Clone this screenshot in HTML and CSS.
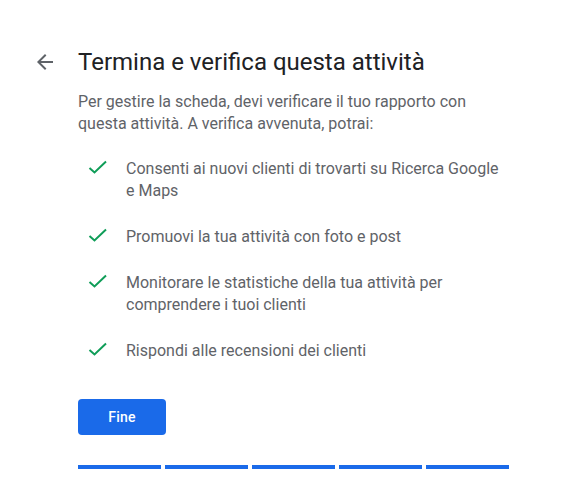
FILE: index.html
```html
<!DOCTYPE html>
<html lang="it">
<head>
<meta charset="utf-8">
<title>Termina e verifica questa attività</title>
<link rel="stylesheet" href="styles.css">
</head>
<body>
<main class="page">
  <header class="header">
    <button class="back" aria-label="Indietro">
      <svg width="24" height="24" viewBox="0 0 24 24"><path d="M20 11H7.83l5.59-5.59L12 4l-8 8 8 8 1.41-1.41L7.83 13H20v-2z" fill="#5f6368"/></svg>
    </button>
    <h1 class="title">Termina e verifica questa attività</h1>
  </header>
  <section class="content">
    <p class="intro">Per gestire la scheda, devi verificare il tuo rapporto con questa attività. A verifica avvenuta, potrai:</p>
    <ul class="list">
      <li class="item"><svg class="check" width="20" height="24" viewBox="0 0 20 24"><polyline points="1.5,13 6.5,17.5 18,6.5" fill="none" stroke="#0f9d58" stroke-width="2"/></svg><span>Consenti ai nuovi clienti di trovarti su Ricerca Google e Maps</span></li>
      <li class="item"><svg class="check" width="20" height="24" viewBox="0 0 20 24"><polyline points="1.5,13 6.5,17.5 18,6.5" fill="none" stroke="#0f9d58" stroke-width="2"/></svg><span>Promuovi la tua attività con foto e post</span></li>
      <li class="item"><svg class="check" width="20" height="24" viewBox="0 0 20 24"><polyline points="1.5,13 6.5,17.5 18,6.5" fill="none" stroke="#0f9d58" stroke-width="2"/></svg><span>Monitorare le statistiche della tua attività per comprendere i tuoi clienti</span></li>
      <li class="item"><svg class="check" width="20" height="24" viewBox="0 0 20 24"><polyline points="1.5,13 6.5,17.5 18,6.5" fill="none" stroke="#0f9d58" stroke-width="2"/></svg><span>Rispondi alle recensioni dei clienti</span></li>
    </ul>
    <button class="primary">Fine</button>
    <div class="progress">
      <span class="seg"></span><span class="seg"></span><span class="seg"></span><span class="seg"></span><span class="seg"></span>
    </div>
  </section>
</main>
</body>
</html>
```
FILE: styles.css
```css
html, body {
  margin: 0;
  padding: 0;
  background: #fff;
}
body {
  font-family: Roboto, "Liberation Sans", Arial, sans-serif;
}
.page {
  padding: 46px 0 0 33px;
  width: 476px;
}
.header {
  display: flex;
  align-items: center;
  gap: 21px;
}
.back {
  border: 0;
  background: none;
  padding: 0;
  width: 24px;
  height: 24px;
  display: flex;
  cursor: pointer;
}
.title {
  margin: 0;
  font-size: 24px;
  line-height: 32px;
  font-weight: 400;
  color: #202124;
}
.content {
  margin-left: 45px;
  width: 431px;
}
.intro {
  margin: 13px 0 0;
  font-size: 16px;
  line-height: 22px;
  color: #5f6368;
}
.list {
  list-style: none;
  margin: 23px 0 0;
  padding: 0;
  display: flex;
  flex-direction: column;
  gap: 24px;
}
.item {
  display: flex;
  align-items: flex-start;
  gap: 18px;
  font-size: 16px;
  line-height: 22px;
  color: #5f6368;
  padding-left: 10px;
}
.check {
  flex: none;
  margin-top: -3px;
}
.primary {
  display: block;
  margin-top: 37px;
  width: 88px;
  height: 36px;
  border: 0;
  border-radius: 4px;
  background: #1a6ae9;
  color: #fff;
  font-family: Roboto, "Liberation Sans", Arial, sans-serif;
  font-size: 14px;
  font-weight: 500;
  letter-spacing: 0.25px;
  cursor: pointer;
}
.progress {
  display: flex;
  gap: 4px;
  margin-top: 30px;
}
.seg {
  flex: 1;
  height: 4px;
  background: #1a6ae9;
}
```
